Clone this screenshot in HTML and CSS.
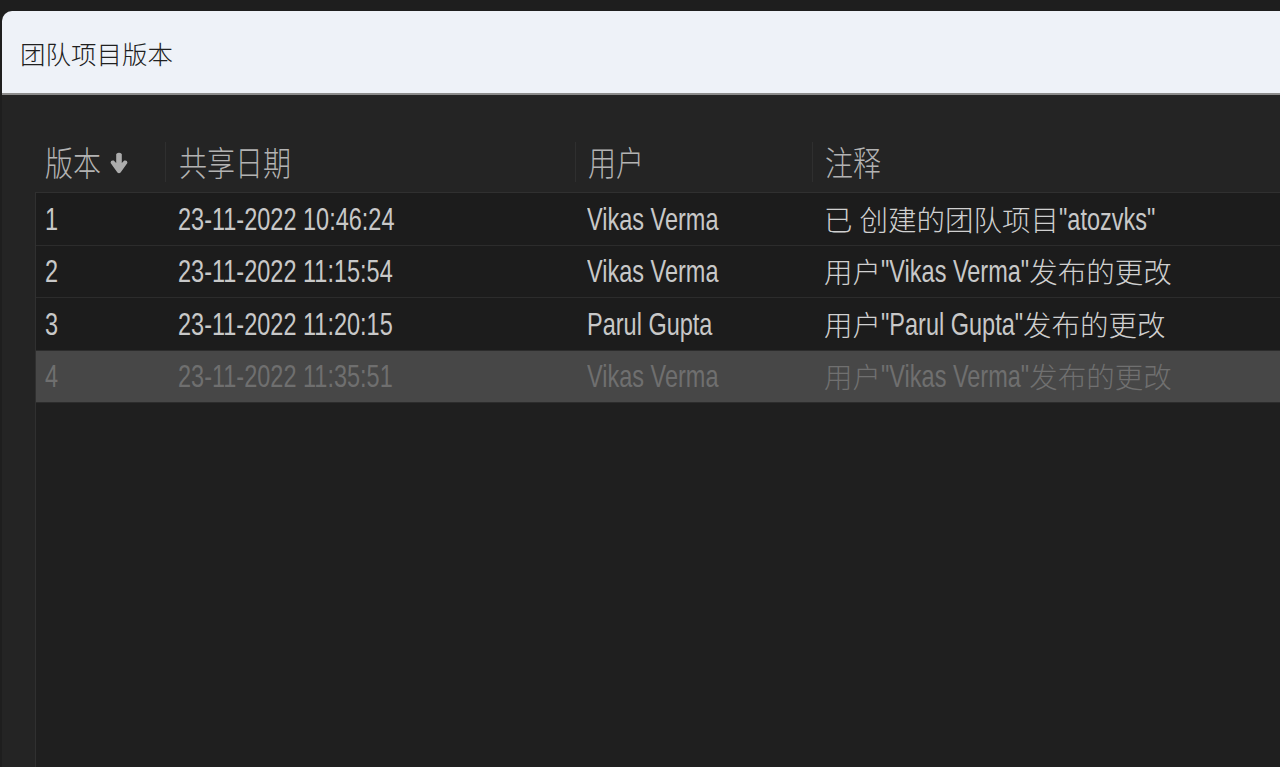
FILE: index.html
```html
<!DOCTYPE html>
<html lang="zh">
<head>
<meta charset="utf-8">
<title>团队项目版本</title>
<link rel="stylesheet" href="styles.css">
</head>
<body>
<div class="topstrip"></div>
<div class="window">
  <div class="titlebar"><span class="title">团队项目版本</span></div>
  <div class="panel">
    <div class="thead">
      <div class="th c1"><span class="hz">版本</span>
        <svg class="sort" width="18" height="22" viewBox="0 0 18 22"><path d="M6.2 2 Q9 -0.4 11.8 2 L11.8 11 L14.2 8.6 Q17.6 7.8 17.4 11 L10.6 20.6 Q9 22 7.4 20.6 L0.6 11 Q0.4 7.8 3.8 8.6 L6.2 11 Z" fill="#acacac"/></svg>
      </div>
      <div class="th c2"><span class="hz">共享日期</span></div>
      <div class="th c3"><span class="hz">用户</span></div>
      <div class="th c4"><span class="hz">注释</span></div>
    </div>
    <div class="tbody">
      <div class="tr">
        <div class="td c1"><span class="lat">1</span></div>
        <div class="td c2"><span class="lat">23-11-2022 10:46:24</span></div>
        <div class="td c3"><span class="lat">Vikas Verma</span></div>
        <div class="td c4 note"><span class="cjk">已</span><span class="gap"></span><span class="cjk">创建的团队项目</span><span class="lat">"atozvks"</span></div>
      </div>
      <div class="tr">
        <div class="td c1"><span class="lat">2</span></div>
        <div class="td c2"><span class="lat">23-11-2022 11:15:54</span></div>
        <div class="td c3"><span class="lat">Vikas Verma</span></div>
        <div class="td c4 note"><span class="cjk">用户</span><span class="lat">"Vikas Verma"</span><span class="cjk">发布的更改</span></div>
      </div>
      <div class="tr">
        <div class="td c1"><span class="lat">3</span></div>
        <div class="td c2"><span class="lat">23-11-2022 11:20:15</span></div>
        <div class="td c3"><span class="lat">Parul Gupta</span></div>
        <div class="td c4 note"><span class="cjk">用户</span><span class="lat">"Parul Gupta"</span><span class="cjk">发布的更改</span></div>
      </div>
      <div class="tr sel">
        <div class="td c1"><span class="lat">4</span></div>
        <div class="td c2"><span class="lat">23-11-2022 11:35:51</span></div>
        <div class="td c3"><span class="lat">Vikas Verma</span></div>
        <div class="td c4 note"><span class="cjk">用户</span><span class="lat">"Vikas Verma"</span><span class="cjk">发布的更改</span></div>
      </div>
    </div>
  </div>
</div>
</body>
</html>
```
FILE: styles.css
```css
html, body {
  margin: 0;
  height: 100%;
}
body {
  background: #1e1e1e;
  overflow: hidden;
  font-family: "Liberation Sans", "Noto Sans CJK SC", sans-serif;
}
.topstrip {
  height: 11px;
}
.window {
  margin-left: 2px;
  height: 756px;
  display: flex;
  flex-direction: column;
}
.titlebar {
  height: 82px;
  flex: none;
  background: #eef2f8;
  border-top-left-radius: 10px;
  border-bottom: 2px solid #8c8c8c;
  display: flex;
  align-items: center;
  padding-left: 18px;
}
.title {
  font-family: "Noto Sans CJK SC", sans-serif;
  font-weight: 300;
  font-size: 25.5px;
  color: #202020;
}
.panel {
  flex: 1;
  background: #242424;
  display: flex;
  flex-direction: column;
}
.thead {
  height: 97px;
  flex: none;
  box-sizing: border-box;
  margin-left: 34px;
  padding-bottom: 10px;
  display: grid;
  grid-template-columns: 129px 410px 237px 1fr;
  align-items: end;
}
.th {
  height: 40px;
  display: flex;
  align-items: center;
  padding-left: 11px;
  color: #b3b3b3;
  font-family: "Noto Sans CJK SC", sans-serif;
  font-weight: 300;
  font-size: 28px;
}
.th + .th {
  border-left: 1px solid #2f2f2f;
}
.hz {
  display: inline-block;
  transform: scaleY(1.2);
}
.sort {
  margin-left: 9px;
  margin-top: 2px;
}
.tbody {
  flex: 1;
  margin-left: 33px;
  border-left: 1px solid #303030;
  border-top: 1px solid #303030;
  background: #1f1f1f;
}
.tr {
  display: grid;
  grid-template-columns: 129px 410px 237px 1fr;
  height: 52.5px;
  box-sizing: border-box;
  border-bottom: 1px solid #2c2c2c;
  background: #1c1c1c;
  align-items: center;
  color: #c8c8c8;
}
.tr.sel {
  background: #474747;
  color: #6f6f6f;
}
.td {
  white-space: nowrap;
  display: flex;
  align-items: center;
}
.c1 { padding-left: 9px; }
.c2 { padding-left: 13px; }
.c3 { padding-left: 12px; }
.c4 { padding-left: 12px; }
.lat {
  display: inline-block;
  font-size: 23.5px;
  line-height: 28px;
  transform: scaleY(1.35);
}
.cjk {
  font-family: "Noto Sans CJK SC", sans-serif;
  font-weight: 300;
  font-size: 28.5px;
  line-height: 40px;
  color: #d0d0d0;
}
.sel .cjk {
  color: #707070;
}
.gap {
  display: inline-block;
  width: 7px;
}
```
